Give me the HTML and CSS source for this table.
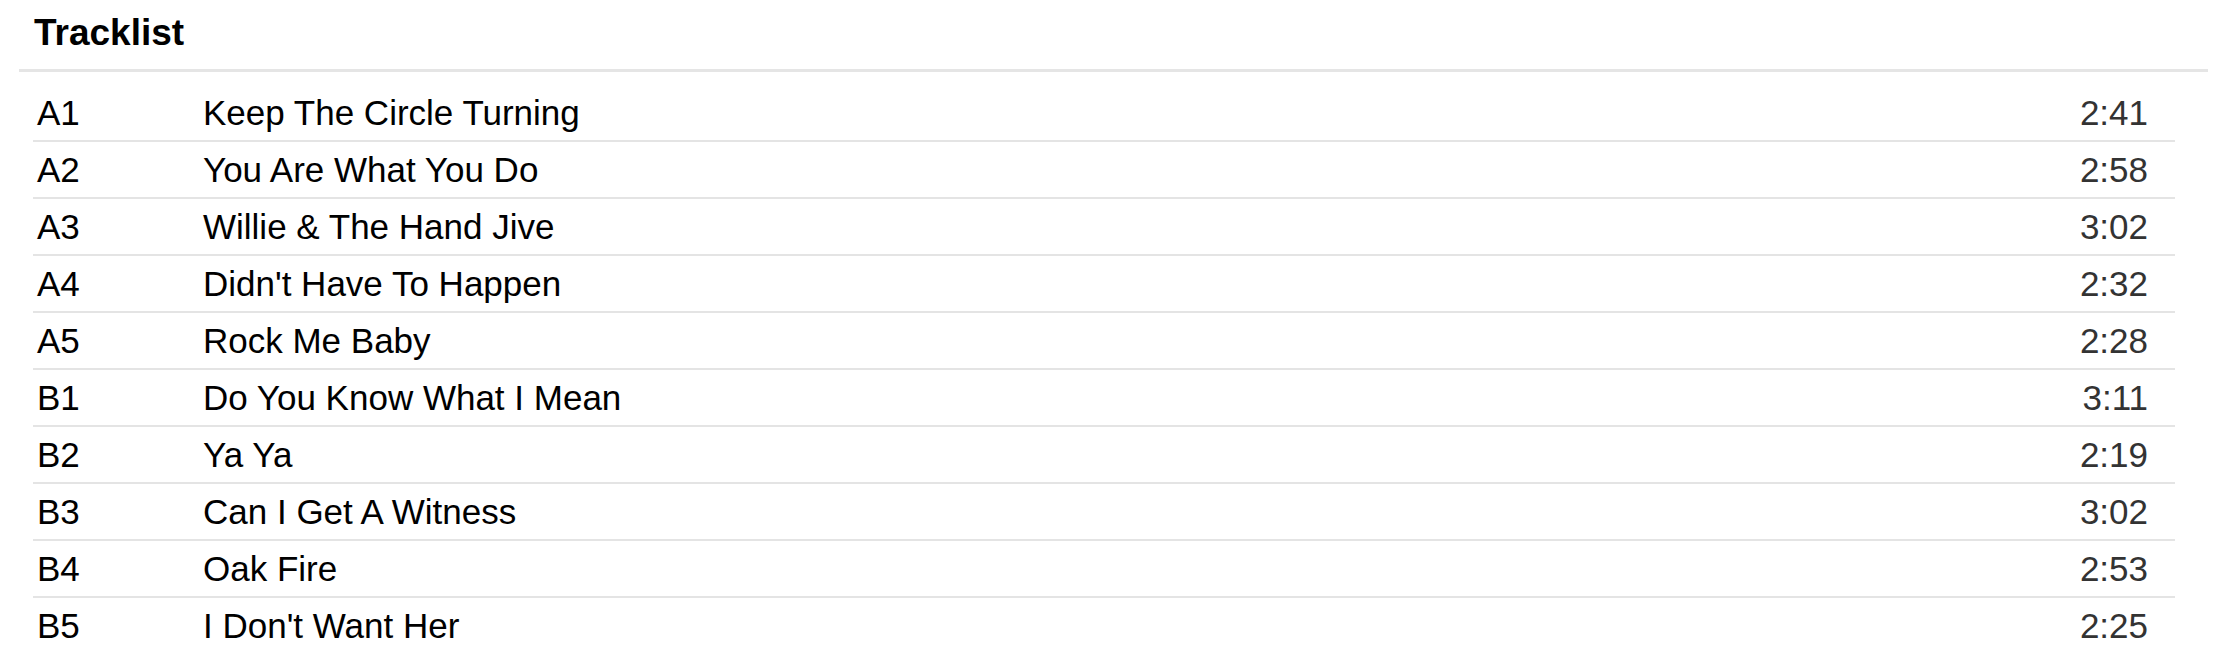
FILE: index.html
```html
<!DOCTYPE html>
<html lang="en">
<head>
<meta charset="utf-8">
<title>Tracklist</title>
<link rel="stylesheet" href="styles.css">
</head>
<body>
<section class="tracklist">
  <div class="tracklist-head">
    <h2 class="tracklist-title">Tracklist</h2>
  </div>
  <table class="tracks">
    <tbody>
      <tr><td class="pos">A1</td><td class="title">Keep The Circle Turning</td><td class="dur">2:41</td></tr>
      <tr><td class="pos">A2</td><td class="title">You Are What You Do</td><td class="dur">2:58</td></tr>
      <tr><td class="pos">A3</td><td class="title">Willie &amp; The Hand Jive</td><td class="dur">3:02</td></tr>
      <tr><td class="pos">A4</td><td class="title">Didn't Have To Happen</td><td class="dur">2:32</td></tr>
      <tr><td class="pos">A5</td><td class="title">Rock Me Baby</td><td class="dur">2:28</td></tr>
      <tr><td class="pos">B1</td><td class="title">Do You Know What I Mean</td><td class="dur">3:11</td></tr>
      <tr><td class="pos">B2</td><td class="title">Ya Ya</td><td class="dur">2:19</td></tr>
      <tr><td class="pos">B3</td><td class="title">Can I Get A Witness</td><td class="dur">3:02</td></tr>
      <tr><td class="pos">B4</td><td class="title">Oak Fire</td><td class="dur">2:53</td></tr>
      <tr><td class="pos">B5</td><td class="title">I Don't Want Her</td><td class="dur">2:25</td></tr>
    </tbody>
  </table>
</section>
</body>
</html>
```
FILE: styles.css
```css
html, body {
  margin: 0;
  padding: 0;
  background: #ffffff;
}

body {
  font-family: "Liberation Sans", Arial, sans-serif;
  color: #000000;
}

.tracklist {
  margin: 0 27px 0 19px;
}

.tracklist-head {
  padding: 12px 15px 16px;
  border-bottom: 3px solid #e5e5e5;
}

.tracklist-title {
  margin: 0;
  font-size: 37px;
  line-height: 41px;
  font-weight: bold;
  color: #000000;
}

.tracks {
  margin: 13px 33px 0 14px;
  width: calc(100% - 47px);
  border-collapse: collapse;
  font-size: 35px;
}

.tracks td {
  padding: 8px 0 7px;
  line-height: 40px;
  border-bottom: 2px solid #e4e4e4;
  vertical-align: top;
  white-space: nowrap;
}

.tracks tr:last-child td {
  border-bottom: none;
}

.tracks .pos {
  width: 166px;
  padding-left: 4px;
  color: #000000;
}

.tracks .title {
  color: #000000;
}

.tracks .dur {
  text-align: right;
  padding-right: 27px;
  color: #333333;
}
```
